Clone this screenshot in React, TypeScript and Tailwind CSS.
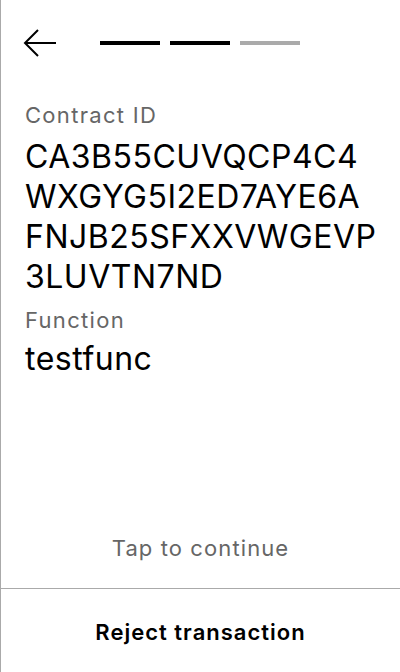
import React from 'react';

const contractId = ['CA3B55CUVQCP4C4', 'WXGYG5I2ED7AYE6A', 'FNJB25SFXXVWGEVP', '3LUVTN7ND'];

const BackArrow: React.FC = () => (
  <svg width="34" height="30" viewBox="0 0 34 30" fill="none" stroke="#000" strokeWidth="2">
    <path d="M2 15H33" />
    <path d="M15 2L2 15L15 28" />
  </svg>
);

const App: React.FC = () => {
  return (
    <div
      className="w-[400px] h-[672px] flex flex-col bg-white border-l border-[#aaaaaa] text-black"
      style={{ fontFamily: 'Inter, "Noto Sans", sans-serif' }}
    >
      {/* header */}
      <div className="flex items-center pt-[28px] pl-[22px]">
        <BackArrow />
        <div className="flex gap-[10px] ml-[43px]">
          <div className="w-[60px] h-[4px] bg-black" />
          <div className="w-[60px] h-[4px] bg-black" />
          <div className="w-[60px] h-[4px] bg-[#aaaaaa]" />
        </div>
      </div>

      {/* details */}
      <div className="flex flex-col pl-[24px] mt-[43px]">
        <div className="text-[22px] leading-[28px] tracking-[1.3px] text-[#666666]">Contract ID</div>
        <div className="mt-[8px] text-[32px] leading-[40px] tracking-[0.5px]">
          {contractId.map(line => (
            <div key={line}>{line}</div>
          ))}
        </div>
        <div className="mt-[9px] text-[22px] leading-[28px] tracking-[1.3px] text-[#666666]">Function</div>
        <div className="mt-[5px] text-[32px] leading-[40px] tracking-[0.5px]">testfunc</div>
      </div>

      <div className="flex-1" />

      <div className="text-center text-[22px] leading-[28px] tracking-[1.1px] text-[#666666] mb-[26px]">
        Tap to continue
      </div>

      <div className="border-t border-[#aaaaaa] h-[84px] flex items-start justify-center pt-[29px]">
        <button className="text-[22px] leading-[28px] tracking-[1px] font-semibold">Reject transaction</button>
      </div>
    </div>
  );
};

export default App;
